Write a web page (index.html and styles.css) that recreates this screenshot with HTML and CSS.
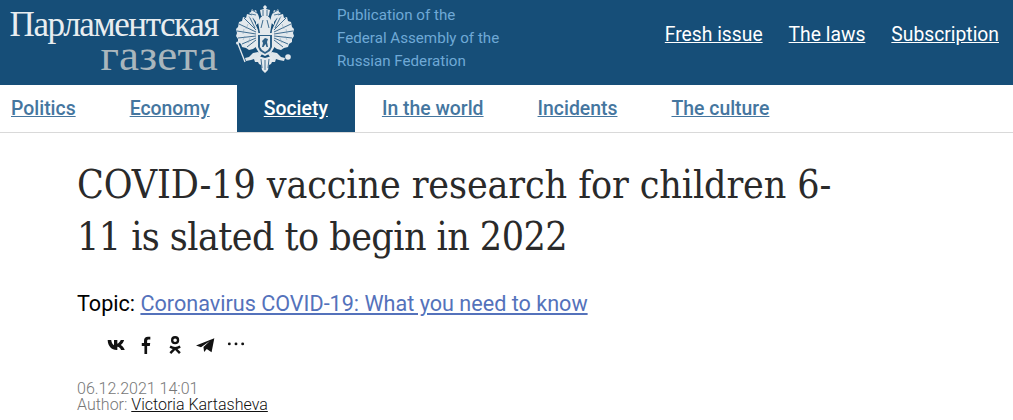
FILE: index.html
```html
<!DOCTYPE html>
<html lang="en">
<head>
<meta charset="utf-8">
<title>COVID-19 vaccine research</title>
<link rel="stylesheet" href="styles.css">
</head>
<body>
<header class="top">
  <a class="logo" href="#">
    <span class="logo-a">Парламентская</span>
    <span class="logo-b">газета</span>
  </a>
  <svg class="emblem" viewBox="0 0 62 68" aria-hidden="true">
    <defs>
      <g id="half">
        <path fill="#e3e9ed" d="M24 25 20 16l-3-6-4-1-1 4-3-1-1 4-3 1-1 5-2 2 1 4-1 3 2 3 0 3 3 2 1 3 4 1 3 2 4-1 3-2 2-3 1-6z"/>
        <path fill="none" stroke="#164e78" stroke-width=".8" d="M22 27 5 19M22 29 3 26M22 31 4 33M22 33 8 39M22 35 13 42M22 25 10 13M21 23 15 11"/>
        <path fill="none" stroke="#7f9cb2" stroke-width=".5" d="M14 19 12 24M10 24 9 29M11 31 9 35M16 33 14 38"/>
        <path fill="#e3e9ed" d="M26 17c-1-4-1-7-3-9l-1-3-2 1-2-2-1 3-2 1 3 2-4 2 5 1 3 4v3z"/>
        <path fill="none" stroke="#164e78" stroke-width=".7" d="M18 5l5 3M17 9l5 1"/>
        <path fill="#dfe6ea" d="M24 47l-5 1-4 4-4 1 1 3 5-1 3-1 1 3 4 0 1-5 2-3z"/>
        <path fill="none" stroke="#dfe6ea" stroke-width="1.300" d="M19 52 15 54"/>
      </g>
    </defs>
    <use href="#half"/>
    <use href="#half" transform="matrix(-1 0 0 1 62 0)"/>
    <path class="em-sceptre" d="M4 39 11 57"/>
    <circle class="em-fill" cx="3.500" cy="38" r="1.500"/>
    <circle class="em-fill" cx="54" cy="52" r="2.800"/>
    <path class="em-fill" d="M31 0l2 2-1 2 4 1-1 5-1 2h-6l-1-2-1-5 4-1-1-2z"/>
    <path class="em-fill" d="M27 12h8l3 5-2 11H26l-2-11z"/>
    <path class="em-dark" d="M29 5v6M33 5v6M29 15l-2 8M33 15l2 8"/>
    <path class="em-fill" d="M22 28h18v15l-3 5-6 3-6-3-3-5z"/>
    <path d="M24 30h14v12l-2 4-5 3-5-3-2-4z" fill="#2c5f86"/>
    <path class="em-fill" d="M26 31h10v11l-2 3-3 2-3-2-2-3z"/>
    <path d="M28 36l3-3 3 1-1 3 1 5h-1.500l-1-3-2 3H28l1-4z" fill="#2c5f86"/>
    <path class="em-fill" d="M24 51l7 2 7-2 1 4-2 4-2 1-1 5-3 3-3-3-1-5-2-1-2-4z"/>
    <path class="em-dark" d="M27 54l1 9M31 55v10M35 54l-1 9"/>
  </svg>
  <p class="tagline">Publication of the<br>Federal Assembly of the<br>Russian Federation</p>
  <nav class="top-links">
    <a href="#">Fresh issue</a>
    <a href="#">The laws</a>
    <a href="#">Subscription</a>
  </nav>
</header>
<nav class="menu">
  <a href="#">Politics</a>
  <a href="#">Economy</a>
  <a href="#" class="active">Society</a>
  <a href="#">In the world</a>
  <a href="#">Incidents</a>
  <a href="#">The culture</a>
</nav>
<main class="article">
  <h1>COVID-19 vaccine research for children 6-<span class="tight">11 is slated to begin in 2022</span></h1>
  <p class="topic">Topic: <a href="#">Coronavirus COVID-19: What you need to know</a></p>
  <div class="share">
    <svg viewBox="-1.500 0 18 18" aria-label="VK"><path d="M0 4.500h3.200c.3 2.600 1.500 4.200 2.500 4.700V4.500h3v3.300c1.200-.3 2.400-1.700 3.100-3.300h3c-.5 2-1.800 3.600-3 4.500 1.200.7 2.800 2.200 3.600 4.500h-3.300c-.6-1.700-1.900-2.800-3.400-3v3H8C3.500 13.500.2 10 0 4.500z"/></svg>
    <svg viewBox="0.800 0 18 18" aria-label="Facebook"><path d="M10.800 17V9.900h2.400l.4-2.800h-2.800V5.500c0-.8.300-1.400 1.500-1.400h1.400V1.600c-.3 0-1.100-.1-2.100-.1-2.200 0-3.600 1.300-3.600 3.700v1.900H6v2.800h2.400V17z"/></svg>
    <svg viewBox="0.800 0 18 18" aria-label="Odnoklassniki"><path fill-rule="evenodd" d="M9 1a3.700 3.700 0 1 1 0 7.400A3.700 3.700 0 0 1 9 1zm0 2.100a1.600 1.600 0 1 0 0 3.200 1.600 1.600 0 0 0 0-3.200z"/><path d="M5 9.500c2.500 1.700 5.500 1.700 8 0l1.100 1.700c-.9.700-1.900 1.100-3 1.300l3 3L12.500 17 9 13.600 5.500 17 3.900 15.500l3-3c-1.100-.2-2.100-.6-3-1.300z"/></svg>
    <svg viewBox="0 0 18 18" aria-label="Telegram"><path d="M0 9.500 16.500 3l-2.500 12.500-4.300-3-2.400 2.700-.6-4.500L12.500 5.500 4.500 11z"/></svg>
    <svg viewBox="0 0 18 18" aria-label="More"><circle cx="3" cy="8" r="1.300"/><circle cx="9" cy="8" r="1.300"/><circle cx="15" cy="8" r="1.300"/></svg>
  </div>
  <div class="meta">
    <div>06.12.2021 14:01</div>
    <div>Author: <a href="#">Victoria Kartasheva</a></div>
  </div>
</main>
</body>
</html>
```
FILE: styles.css
```css
* { box-sizing: border-box; }
html, body { margin: 0; padding: 0; overflow: hidden; }
body { background: #fff; font-family: Roboto, "Liberation Sans", sans-serif; color: #000; height: 420px; }

.top { height: 85px; background: #164e78; display: flex; align-items: flex-start; padding-left: 10px; }
.logo { width: 208px; margin-top: 9px; display: flex; flex-direction: column; align-items: flex-end; font-family: "Liberation Serif", serif; text-decoration: none; }
.logo-a { color: #e8edf0; font-size: 35px; letter-spacing: -1.4px; line-height: 32px; white-space: nowrap; }
.logo-b { color: #a9b6bd; font-size: 45px; letter-spacing: .2px; line-height: 28px; white-space: nowrap; }
.emblem { width: 62px; height: 68px; margin: 5px 0 0 16px; flex: none; filter: blur(.3px); }
.em-fill { fill: #e3e9ed; }
.em-dark { fill: none; stroke: #164e78; stroke-width: .8; }
.em-sceptre { fill: none; stroke: #e3e9ed; stroke-width: 1.300; }
.tagline { margin: 4px 0 0 41px; font-size: 15.15px; line-height: 23px; color: #6fa9d6; white-space: nowrap; }
.top-links { margin-left: auto; padding: 23px 14px 0 0; display: flex; gap: 26px; }
.top-links a { color: #fff; font-size: 19.3px; line-height: 24px; }

.menu { height: 48px; display: flex; border-bottom: 1px solid #d9d9d9; }
.menu a { color: #45769f; font-size: 19.4px; font-weight: 500; line-height: 47px; padding: 0 27px; }
.menu a:first-child { padding-left: 11px; }
.menu a.active { background: #164e78; color: #fff; }

.article { padding: 0 0 0 77px; }
h1 { margin: 26px 0 0; width: 765px; font-family: "DejaVu Serif Condensed", "DejaVu Serif", serif; font-weight: 400; font-size: 39px; line-height: 52px; letter-spacing: -.1px; color: #2a2a2a; }
h1 .tight { letter-spacing: -.55px; }
.topic { margin: 27px 0 0; font-size: 21.6px; line-height: 28px; }
.topic a { color: #5472bb; }
.share { margin: 17px 0 0 28.5px; display: flex; gap: 10px; }
.share svg { width: 20px; height: 20px; flex: none; fill: #111; }
.meta { margin-top: 26px; font-size: 16px; line-height: 16px; font-weight: 300; color: #777; }
.meta a { color: #111; }
```
